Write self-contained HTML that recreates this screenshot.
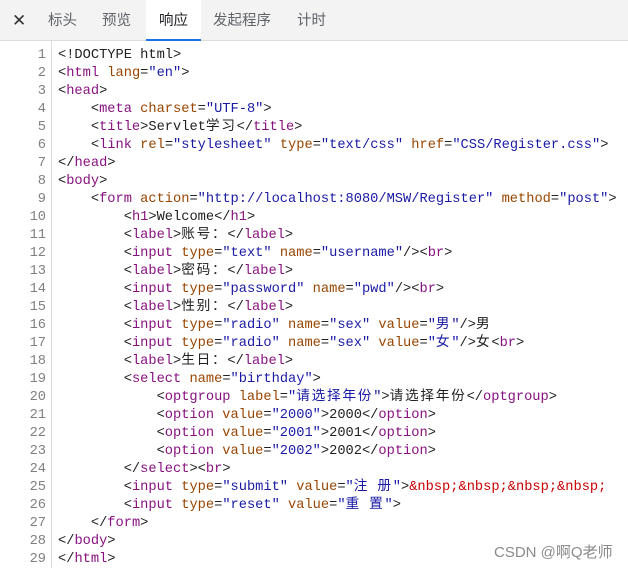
<!DOCTYPE html>
<html><head><meta charset="utf-8"><style>
body{margin:0;width:628px;height:568px;overflow:hidden;background:#fff;font-family:"Liberation Sans","Noto Sans CJK SC",sans-serif;position:relative}
.bar{position:absolute;left:0;top:0;width:628px;height:41px;background:#f3f3f3;border-bottom:1px solid #dcdcdc;box-sizing:border-box}
.tab{position:absolute;top:0;height:40px;line-height:42px;font-size:14.5px;color:#5f6368}
.act{background:#fff;color:#202124;border-bottom:2px solid #1a73e8;box-sizing:border-box;height:41px;text-align:center}
.gut{position:absolute;left:51px;top:41px;width:1px;height:527px;background:#ddd}
pre{margin:0;position:absolute;top:47px;font-family:"Liberation Mono","Noto Sans CJK SC",monospace;font-size:13.7px;line-height:18px;color:#222}
.ln{left:0;width:46px;text-align:right;color:#808080}
.code{left:58px}
.t{color:#881280}.a{color:#994500}.v{color:#1a1aa6}.e{color:#c80000}
.c{letter-spacing:1.7px}
.wm{position:absolute;left:494px;top:541px;font-size:15px;color:#8a8a8a}
</style></head><body>
<div class="bar">
<div class="tab" style="left:12px;color:#333;font-size:17px">✕</div>
<div class="tab" style="left:48px">标头</div>
<div class="tab" style="left:102px">预览</div>
<div class="tab act" style="left:146px;width:55px">响应</div>
<div class="tab" style="left:213px">发起程序</div>
<div class="tab" style="left:297px">计时</div>
</div>
<div class="gut"></div>
<pre class="ln">1
2
3
4
5
6
7
8
9
10
11
12
13
14
15
16
17
18
19
20
21
22
23
24
25
26
27
28
29</pre>
<pre class="code">&lt;!DOCTYPE html&gt;
&lt;<span class="t">html</span> <span class="a">lang</span>=<span class="v">"en"</span>&gt;
&lt;<span class="t">head</span>&gt;
    &lt;<span class="t">meta</span> <span class="a">charset</span>=<span class="v">"UTF-8"</span>&gt;
    &lt;<span class="t">title</span>&gt;Servlet<span class="c">学习</span>&lt;/<span class="t">title</span>&gt;
    &lt;<span class="t">link</span> <span class="a">rel</span>=<span class="v">"stylesheet"</span> <span class="a">type</span>=<span class="v">"text/css"</span> <span class="a">href</span>=<span class="v">"CSS/Register.css"</span>&gt;
&lt;/<span class="t">head</span>&gt;
&lt;<span class="t">body</span>&gt;
    &lt;<span class="t">form</span> <span class="a">action</span>=<span class="v">"http://localhost:8080/MSW/Register"</span> <span class="a">method</span>=<span class="v">"post"</span>&gt;
        &lt;<span class="t">h1</span>&gt;Welcome&lt;/<span class="t">h1</span>&gt;
        &lt;<span class="t">label</span>&gt;<span class="c">账号：</span>&lt;/<span class="t">label</span>&gt;
        &lt;<span class="t">input</span> <span class="a">type</span>=<span class="v">"text"</span> <span class="a">name</span>=<span class="v">"username"</span>/&gt;&lt;<span class="t">br</span>&gt;
        &lt;<span class="t">label</span>&gt;<span class="c">密码：</span>&lt;/<span class="t">label</span>&gt;
        &lt;<span class="t">input</span> <span class="a">type</span>=<span class="v">"password"</span> <span class="a">name</span>=<span class="v">"pwd"</span>/&gt;&lt;<span class="t">br</span>&gt;
        &lt;<span class="t">label</span>&gt;<span class="c">性别：</span>&lt;/<span class="t">label</span>&gt;
        &lt;<span class="t">input</span> <span class="a">type</span>=<span class="v">"radio"</span> <span class="a">name</span>=<span class="v">"sex"</span> <span class="a">value</span>=<span class="v">"<span class="c">男</span>"</span>/&gt;<span class="c">男</span>
        &lt;<span class="t">input</span> <span class="a">type</span>=<span class="v">"radio"</span> <span class="a">name</span>=<span class="v">"sex"</span> <span class="a">value</span>=<span class="v">"<span class="c">女</span>"</span>/&gt;<span class="c">女</span>&lt;<span class="t">br</span>&gt;
        &lt;<span class="t">label</span>&gt;<span class="c">生日：</span>&lt;/<span class="t">label</span>&gt;
        &lt;<span class="t">select</span> <span class="a">name</span>=<span class="v">"birthday"</span>&gt;
            &lt;<span class="t">optgroup</span> <span class="a">label</span>=<span class="v">"<span class="c">请选择年份</span>"</span>&gt;<span class="c">请选择年份</span>&lt;/<span class="t">optgroup</span>&gt;
            &lt;<span class="t">option</span> <span class="a">value</span>=<span class="v">"2000"</span>&gt;2000&lt;/<span class="t">option</span>&gt;
            &lt;<span class="t">option</span> <span class="a">value</span>=<span class="v">"2001"</span>&gt;2001&lt;/<span class="t">option</span>&gt;
            &lt;<span class="t">option</span> <span class="a">value</span>=<span class="v">"2002"</span>&gt;2002&lt;/<span class="t">option</span>&gt;
        &lt;/<span class="t">select</span>&gt;&lt;<span class="t">br</span>&gt;
        &lt;<span class="t">input</span> <span class="a">type</span>=<span class="v">"submit"</span> <span class="a">value</span>=<span class="v">"<span class="c">注</span> <span class="c">册</span>"</span>&gt;<span class="e">&amp;nbsp;&amp;nbsp;&amp;nbsp;&amp;nbsp;</span>
        &lt;<span class="t">input</span> <span class="a">type</span>=<span class="v">"reset"</span> <span class="a">value</span>=<span class="v">"<span class="c">重</span> <span class="c">置</span>"</span>&gt;
    &lt;/<span class="t">form</span>&gt;
&lt;/<span class="t">body</span>&gt;
&lt;/<span class="t">html</span>&gt;</pre>
<div class="wm">CSDN @啊Q老师</div>
</body></html>
